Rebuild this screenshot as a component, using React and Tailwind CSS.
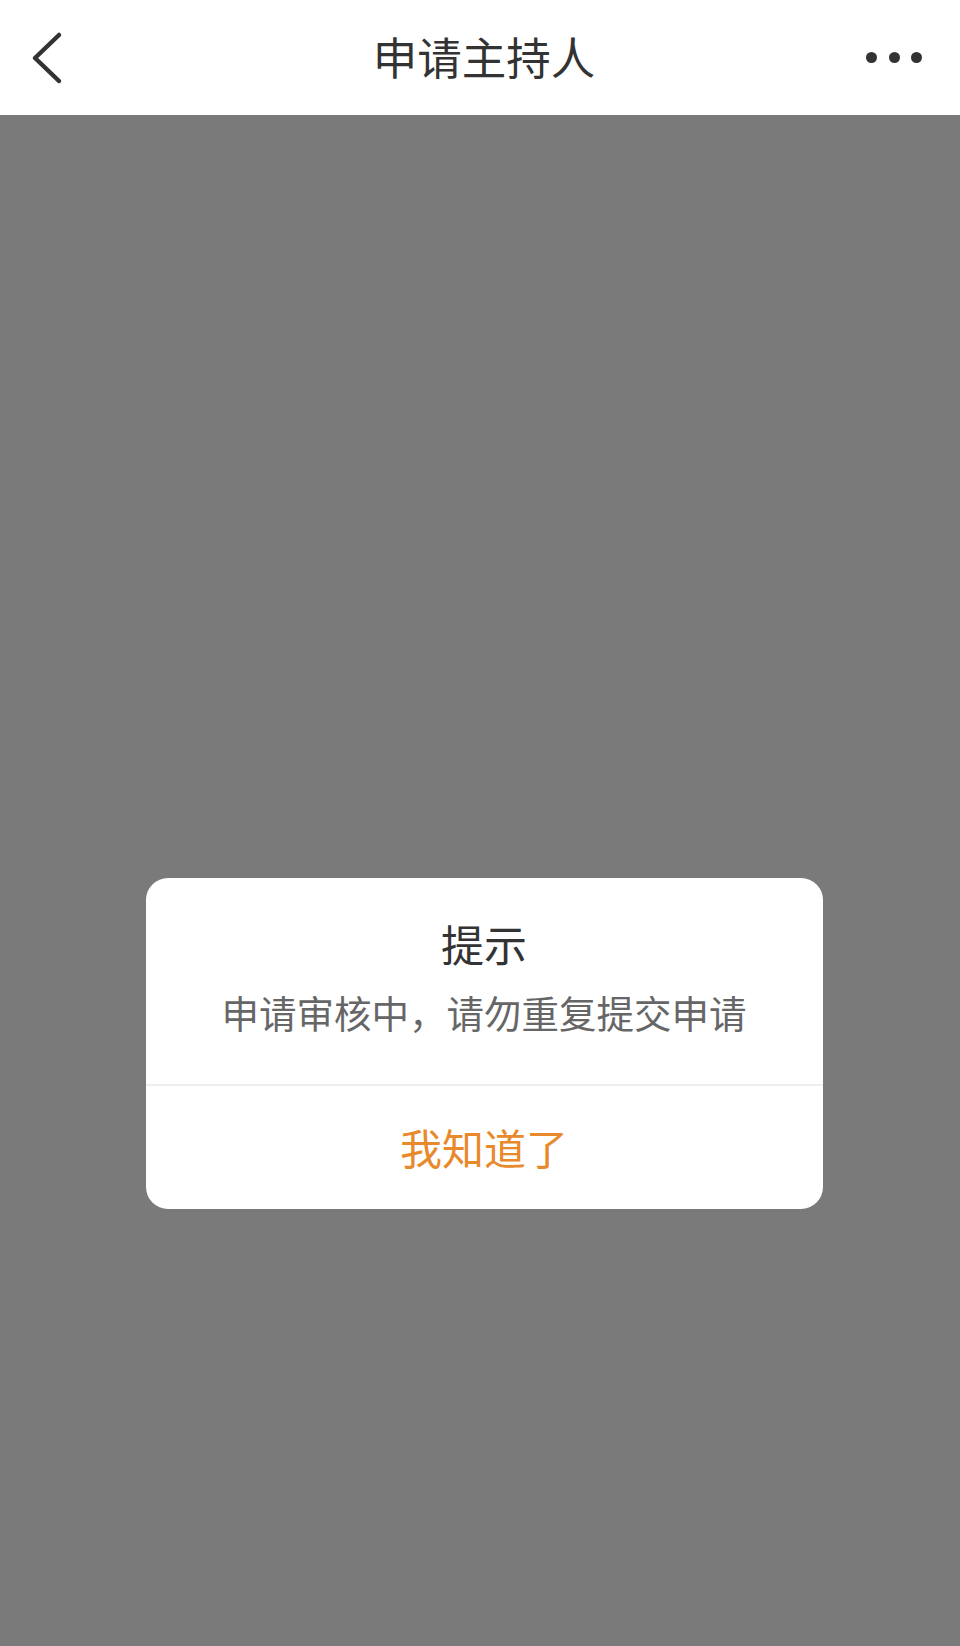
import React from 'react';

const cjk = { fontFamily: '"Noto Sans CJK SC", "Noto Sans", sans-serif' };

const BackIcon = () => (
  <svg width="36" height="54" viewBox="0 0 36 54" fill="none">
    <path d="M29 4 L5 27 L29 50" stroke="#333" strokeWidth="4.5" strokeLinecap="round" strokeLinejoin="round" />
  </svg>
);

const MoreIcon = () => (
  <div className="flex items-center gap-[11.5px]">
    <span className="w-[11px] h-[11px] rounded-full bg-[#333]" />
    <span className="w-[11px] h-[11px] rounded-full bg-[#333]" />
    <span className="w-[11px] h-[11px] rounded-full bg-[#333]" />
  </div>
);

export default function App() {
  return (
    <div className="w-[960px] h-[1646px] flex flex-col bg-[#7a7a7a]" style={cjk}>
      {/* Header */}
      <header className="h-[115px] bg-white grid grid-cols-[1fr_auto_1fr] items-center pl-2">
        <div className="flex items-center pl-[22px]">
          <BackIcon />
        </div>
        <h1 className="text-[44.5px] leading-none text-[#333] font-normal pb-[2px]">申请主持人</h1>
        <div className="flex justify-end pr-[38px]">
          <MoreIcon />
        </div>
      </header>

      {/* Overlay + dialog */}
      <main className="flex-1 flex flex-col items-center pl-2 pt-[763px]">
        <div className="w-[677px] bg-white rounded-[22px] flex flex-col items-center overflow-hidden">
          <div className="pt-[38px] pb-[47px] flex flex-col items-center gap-[17px]">
            <h2 className="text-[43px] leading-[54px] text-[#333] font-normal">提示</h2>
            <p className="text-[37.5px] leading-[50px] text-[#666]">申请审核中，请勿重复提交申请</p>
          </div>
          <div className="w-full h-[2px] bg-[#eeeeee]" />
          <button className="w-full h-[123px] flex items-center justify-center text-[42px] text-[#e8892b] pb-[2px]">
            我知道了
          </button>
        </div>
      </main>
    </div>
  );
}
